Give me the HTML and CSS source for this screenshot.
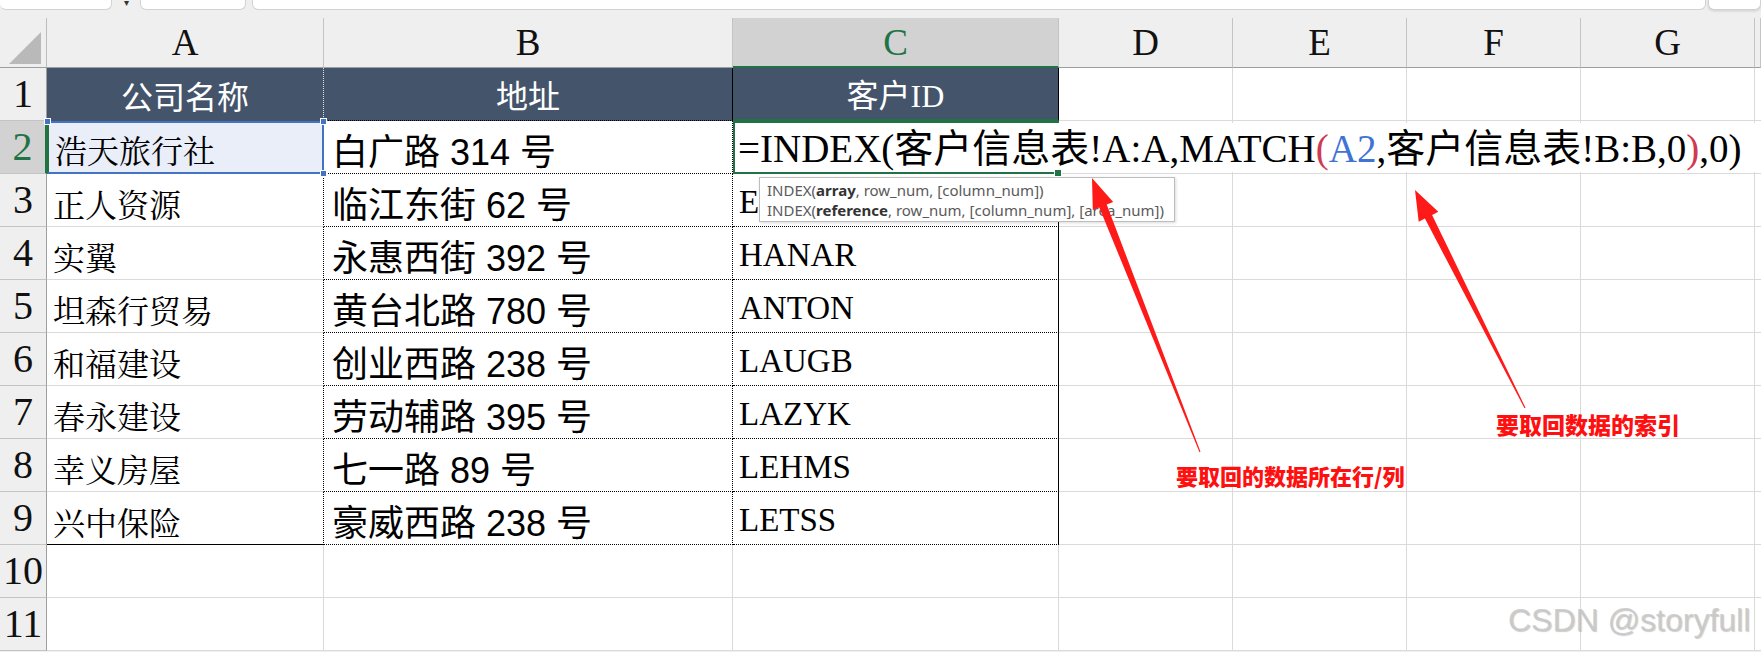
FILE: index.html
```html
<!DOCTYPE html>
<html lang="zh-CN">
<head>
  <meta charset="UTF-8" />
  <title>INDEX MATCH</title>
  <link rel="stylesheet" href="styles.css">
</head>
<body>
  <div class="topbar">
    <div class="box namebox"></div>
    <span class="caret">▾</span>
    <div class="box fxbox"></div>
    <div class="box formulabox"></div>
    <div class="box sidebox"></div>
  </div>

  <div class="sheet" id="sheet">
    <div class="corner"></div>
    <div class="colhead">A</div>
    <div class="colhead">B</div>
    <div class="colhead sel">C</div>
    <div class="colhead">D</div>
    <div class="colhead">E</div>
    <div class="colhead">F</div>
    <div class="colhead">G</div>
    <div class="colhead"></div>

    <div class="rh">1</div>
    <div class="c hdr hdr-a">公司名称</div>
    <div class="c hdr hdr-b">地址</div>
    <div class="c hdr hdr-c">客户ID</div>
    <div class="c"></div><div class="c"></div><div class="c"></div><div class="c"></div><div class="c"></div>

    <div class="rh sel">2</div>
    <div class="c a ref-cell">浩天旅行社
      <span class="handle h-tl"></span>
      <span class="handle h-tr"></span>
      <span class="handle h-br"></span>
    </div>
    <div class="c b">白广路 314 号</div>
    <div class="c cc active">
      <div class="editor">=INDEX(客户信息表!A:A,MATCH<span class="paren">(</span><span class="ref">A2</span>,客户信息表!B:B,0<span class="paren">)</span>,0)</div>
      <span class="fill-handle"></span>
      <div class="tip">
        <div>INDEX(<b>array</b>, row_num, [column_num])</div>
        <div>INDEX(<b>reference</b>, row_num, [column_num], [area_num])</div>
      </div>
    </div>
    <div class="c"></div><div class="c"></div><div class="c"></div><div class="c"></div><div class="c"></div>
  </div>

  <svg class="arrows" width="1761" height="652" viewBox="0 0 1761 652">
    <polygon points="1200.5,451.8 1106.7,204.4 1113.2,201.9 1092,178 1092.8,209.9 1099.3,207.4 1199.5,452.2" />
    <polygon points="1525.5,407.8 1432.1,215.0 1438.3,211.8 1415,190 1418.7,221.8 1424.9,218.6 1524.5,408.2" />
  </svg>
  <div class="note note-row">要取回的数据所在行/列</div>
  <div class="note note-idx">要取回数据的索引</div>
  <div class="watermark">CSDN @storyfull</div>

  <script>
    const rows = [
      ["正人资源", "临江东街 62 号", "ERNSH"],
      ["实翼", "永惠西街 392 号", "HANAR"],
      ["坦森行贸易", "黄台北路 780 号", "ANTON"],
      ["和福建设", "创业西路 238 号", "LAUGB"],
      ["春永建设", "劳动辅路 395 号", "LAZYK"],
      ["幸义房屋", "七一路 89 号", "LEHMS"],
      ["兴中保险", "豪威西路 238 号", "LETSS"]
    ];

    const sheet = document.getElementById("sheet");

    function cell(cls, text) {
      const d = document.createElement("div");
      d.className = cls;
      if (text) d.textContent = text;
      sheet.appendChild(d);
    }

    rows.forEach(function (r, i) {
      cell("rh", String(i + 3));
      cell(i === rows.length - 1 ? "c a last" : "c a", r[0]);
      cell("c b", r[1]);
      cell("c cc", r[2]);
      for (let k = 0; k < 5; k++) cell("c");
    });

    // two empty rows below the table
    for (let n = 10; n <= 11; n++) {
      cell("rh", String(n));
      for (let k = 0; k < 8; k++) cell("c");
    }
  </script>
</body>
</html>
```

FILE: styles.css
```css
body {
  margin: 0;
  width: 1761px;
  height: 652px;
  overflow: hidden;
  position: relative;
  background: #efefef;
  font-family: "Liberation Serif", "Noto Sans CJK SC", serif;
}

/* formula bar remains at the top */
.topbar {
  height: 18px;
  display: flex;
  align-items: flex-start;
  background: #efefef;
}

.box {
  height: 9px;
  background: #fff;
  border: 1px solid #d2d2d2;
  border-top: none;
  border-radius: 0 0 6px 6px;
}

.namebox { width: 111px; border-left: none; }
.caret { width: 28px; font-size: 10px; line-height: 6px; text-align: center; color: #333; }
.fxbox { width: 104px; }
.formulabox { width: 1452px; margin-left: 6px; }
.sidebox { flex: 1; margin-left: 2px; box-shadow: 0 1px 3px rgba(0, 0, 0, 0.15); }

/* grid */
.sheet {
  display: grid;
  grid-template-columns: 47px 277px 409px 326px repeat(4, 174px) 6px;
  grid-template-rows: 50px repeat(11, 53px);
}

.sheet > div { box-sizing: border-box; }

.corner {
  background: #efefef;
  border-right: 1px solid #bcbcbc;
  border-bottom: 1px solid #9e9e9e;
  position: relative;
}

.corner::after {
  content: "";
  position: absolute;
  right: 5px;
  bottom: 3px;
  border-left: 32px solid transparent;
  border-bottom: 32px solid #b9b9b9;
}

.colhead {
  background: #efefef;
  border-right: 1px solid #c4c4c4;
  border-bottom: 1px solid #9e9e9e;
  display: flex;
  align-items: center;
  justify-content: center;
  font-size: 37px;
  color: #111;
}

.colhead.sel {
  background: #d2d2d2;
  color: #217346;
  border-bottom: 2px solid #217346;
}

.rh {
  background: #efefef;
  border-right: 1px solid #9e9e9e;
  border-bottom: 1px solid #c4c4c4;
  display: flex;
  align-items: flex-end;
  justify-content: center;
  padding-bottom: 6px;
  font-size: 40px;
  line-height: 1;
  color: #111;
}

.rh.sel {
  background: #d2d2d2;
  color: #217346;
  border-right: 2px solid #217346;
}

.c {
  background: #fff;
  border-right: 1px solid #dadada;
  border-bottom: 1px solid #dadada;
  display: flex;
  align-items: flex-end;
  padding: 0 6px 7px;
  white-space: nowrap;
  line-height: 1;
  color: #000;
}

.hdr {
  background: #44546a;
  color: #fff;
  justify-content: center;
  font-size: 32px;
  font-family: "Liberation Serif", "Noto Sans CJK SC", serif;
}

.hdr-a { border-right: 1px dotted #e0e0e0; border-bottom: none; }
.hdr-b { border-right: 1px solid #000; border-bottom: 1px dotted #000; }
.hdr-c { border-right: 1px solid #000; border-bottom: 2px solid #217346; }

.a {
  font-family: "Noto Serif CJK SC", "Noto Sans CJK SC", serif;
  font-size: 32px;
  border-right: 1px dotted #000;
}

.a.last { border-bottom: 1px solid #000; }

.b {
  font-family: "Liberation Sans", "Noto Sans CJK SC", sans-serif;
  font-size: 36px;
  padding-left: 8px;
  padding-bottom: 2px;
  border-right: 1px dotted #000;
  border-bottom: 1px dotted #000;
}

.cc {
  font-family: "Liberation Serif", "Noto Sans CJK SC", serif;
  font-size: 33px;
  border-right: 1px solid #000;
  border-bottom: 1px dotted #000;
}

/* A2 referenced by the formula */
.ref-cell {
  background: #e9eef8;
  border: 2px solid #4472c4;
  border-left-color: #217346;
  position: relative;
  z-index: 2;
}

.handle {
  position: absolute;
  width: 5px;
  height: 5px;
  background: #4472c4;
  border: 1px solid #fff;
}

.h-tl { left: -5px; top: -5px; }
.h-tr { right: -5px; top: -5px; }
.h-br { right: -5px; bottom: -5px; }

/* C2 in edit mode */
.active {
  border: 2px solid #217346;
  position: relative;
  z-index: 3;
}

.editor {
  position: absolute;
  left: 0;
  top: 0;
  bottom: 0;
  width: 1022px;
  padding: 0 0 4px 3px;
  box-sizing: border-box;
  background: #fff;
  display: flex;
  align-items: flex-end;
  font-family: "Liberation Serif", "Noto Sans CJK SC", serif;
  font-size: 39px;
  line-height: 1;
  white-space: nowrap;
  color: #000;
}

.paren { color: #d0394f; }
.ref { color: #3f73d6; }

.fill-handle {
  position: absolute;
  right: -5px;
  bottom: -5px;
  width: 6px;
  height: 6px;
  background: #217346;
  border: 1px solid #fff;
  z-index: 1;
}

.tip {
  position: absolute;
  left: 24px;
  top: 54px;
  width: 416px;
  height: 45px;
  box-sizing: border-box;
  padding: 2px 7px;
  background: #fff;
  border: 1px solid #bdbdbd;
  box-shadow: 1px 1px 3px rgba(0, 0, 0, 0.15);
  font-family: "Noto Sans", "Liberation Sans", sans-serif;
  font-size: 15px;
  line-height: 20px;
  color: #5a5a5a;
  white-space: nowrap;
}

.tip b { color: #333; }

/* annotations */
.arrows {
  position: absolute;
  left: 0;
  top: 0;
  z-index: 10;
  pointer-events: none;
}

.arrows polygon { fill: #ff1a1a; }

.note {
  position: absolute;
  z-index: 10;
  font-family: "Noto Sans CJK SC", sans-serif;
  font-weight: 900;
  color: #ff1010;
  font-size: 22px;
  line-height: 1;
  white-space: nowrap;
}

.note-row { left: 1176px; top: 464px; }
.note-idx { left: 1496px; top: 413px; font-size: 23px; }

.watermark {
  position: absolute;
  left: 1508px;
  top: 602px;
  z-index: 10;
  font-family: "Liberation Sans", sans-serif;
  font-size: 32px;
  color: rgba(200, 200, 200, 0.85);
  text-shadow: 1px 1px 1px rgba(0, 0, 0, 0.2);
  white-space: nowrap;
}
```
